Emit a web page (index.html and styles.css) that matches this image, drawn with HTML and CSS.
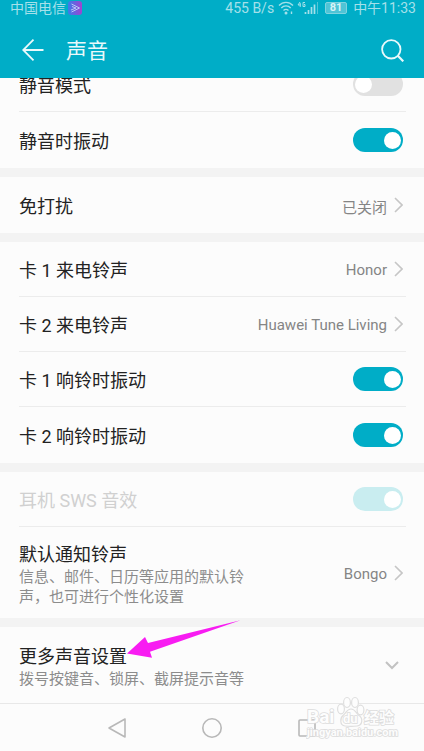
FILE: index.html
```html
<!DOCTYPE html>
<html lang="zh-CN">
<head>
<meta charset="utf-8">
<meta name="viewport" content="width=device-width, initial-scale=1">
<title>声音</title>
<link rel="stylesheet" href="styles.css">
</head>
<body>
<header class="top">
  <div class="status">
    <span>中国电信</span>
    <svg class="app-badge" width="14" height="14" viewBox="0 0 14 14" aria-hidden="true">
      <defs><linearGradient id="g" x1="0" y1="0" x2="1" y2="0"><stop offset="0" stop-color="#3b7bea"/><stop offset="1" stop-color="#a044d0"/></linearGradient></defs>
      <rect width="14" height="14" rx="3" fill="url(#g)"/>
      <path d="M3.500 3l8 4-8 4M4 5.500l4 1.500-5 2" fill="none" stroke="#b9c8f8" stroke-width="1"/>
    </svg>
    <span class="speed">455 B/s</span>
    <svg class="wifi" width="16" height="14" viewBox="0 0 16 14" fill="none" stroke="#a5e0ea" stroke-width="1.400" aria-hidden="true">
      <path d="M1 4.500C5 .3 11 .3 15 4.500M3.300 7c2.600-2.800 6.800-2.800 9.400 0M5.500 9.500c1.500-1.500 3.500-1.500 5 0"/>
      <circle cx="8" cy="12" r=".8" fill="#a5e0ea"/><path d="M13.500 10.500v2.500"/>
    </svg>
    <svg class="signal" width="21" height="14" viewBox="0 0 21 14" fill="none" stroke="#a5e0ea" aria-hidden="true">
      <path d="M3 1L1 4h3M3.200 2v4M8 1.500H6v4h2V3.500H7" stroke-width="1"/>
      <path d="M8.500 11v2M11.500 9v4M14.500 6v7M17.500 3.500V13" stroke-width="1.700"/>
      <path d="M20.500 1v12" stroke-width="1" opacity=".5"/>
    </svg>
    <span class="battery">81</span>
    <span>中午11:33</span>
  </div>
  <div class="bar">
    <button class="icon-btn" aria-label="返回">
      <svg width="22" height="22" viewBox="0 0 22 22" fill="none" stroke="#e9f9fb" stroke-width="1.800"><path d="M21.500 11H1.200M11.500 .7L1.200 11l10.300 10.300"/></svg>
    </button>
    <h1>声音</h1>
    <button class="icon-btn" aria-label="搜索">
      <svg width="23" height="23" viewBox="0 0 23 23" fill="none" stroke="#e9f9fb" stroke-width="1.800"><circle cx="10.300" cy="10.300" r="9.200"/><path d="M16.800 16.800l5.500 5.500" stroke-width="2.200"/></svg>
    </button>
  </div>
</header>

<main class="list">
  <section class="card">
    <label class="row"><span class="name">静音模式</span><input class="switch" type="checkbox"></label>
    <label class="row"><span class="name">静音时振动</span><input class="switch" type="checkbox" checked></label>
  </section>
  <section class="card">
    <a class="row" href="#dnd"><span class="name">免打扰</span><span class="value">已关闭</span><svg class="chev" width="9" height="16" viewBox="0 0 9 16"><path d="M1 1l7 7-7 7"/></svg></a>
  </section>
  <section class="card">
    <a class="row" href="#sim1"><span class="name">卡 1 来电铃声</span><span class="value">Honor</span><svg class="chev" width="9" height="16" viewBox="0 0 9 16"><path d="M1 1l7 7-7 7"/></svg></a>
    <a class="row" href="#sim2"><span class="name">卡 2 来电铃声</span><span class="value">Huawei Tune Living</span><svg class="chev" width="9" height="16" viewBox="0 0 9 16"><path d="M1 1l7 7-7 7"/></svg></a>
    <label class="row"><span class="name">卡 1 响铃时振动</span><input class="switch" type="checkbox" checked></label>
    <label class="row"><span class="name">卡 2 响铃时振动</span><input class="switch" type="checkbox" checked></label>
  </section>
  <section class="card">
    <label class="row off"><span class="name">耳机 SWS 音效</span><input class="switch" type="checkbox" checked disabled></label>
    <a class="row tall" href="#notify"><span class="text"><span class="name">默认通知铃声</span><span class="sub">信息、邮件、日历等应用的默认铃声，也可进行个性化设置</span></span><span class="value">Bongo</span><svg class="chev" width="9" height="16" viewBox="0 0 9 16"><path d="M1 1l7 7-7 7"/></svg></a>
  </section>
  <section class="card">
    <button class="row more"><span class="text"><span class="name marked">更多声音设置<svg class="pointer" width="114" height="39" viewBox="0 0 114 39" aria-hidden="true"><path d="M0 33.500L18 17l3 6L113.500 .3 23 31.700l2 6z" fill="#f81cf2"/></svg></span><span class="sub">拨号按键音、锁屏、截屏提示音等</span></span><svg class="down" width="14" height="9" viewBox="0 0 14 9"><path d="M1 1l6 6 6-6"/></svg></button>
  </section>
</main>

<nav class="nav">
  <button class="icon-btn" aria-label="后退"><svg width="20" height="22" viewBox="0 0 20 22"><path d="M18 2v18L2 11z"/></svg></button>
  <button class="icon-btn" aria-label="主页"><svg width="20" height="22" viewBox="0 0 20 22"><circle cx="10" cy="11" r="9.200"/></svg></button>
  <button class="icon-btn" aria-label="最近任务"><svg width="20" height="22" viewBox="0 0 20 22"><rect x="2" y="3" width="16" height="16" rx="1"/></svg></button>
  <svg class="mark" width="100" height="46" viewBox="0 0 100 46">
    <g fill="#fdfdfd" stroke="#dedede" stroke-width="1.200">
      <ellipse cx="35" cy="14" rx="3.400" ry="4.800"/><ellipse cx="41" cy="7.500" rx="3.400" ry="5"/><ellipse cx="49" cy="7.500" rx="3.400" ry="5"/><ellipse cx="54.500" cy="15" rx="3.400" ry="4.800"/>
      <path d="M45 14c-4 0-5 4-8 6.500-3 2.500-3.500 10 2 10.500 3 .4 9 .4 12 0 6-.8 6-8 2-10.500-3-2.500-4-6.500-8-6.500z"/>
    </g>
    <g class="mark-text">
      <text x="1" y="28" font-size="19">Bai</text>
      <text x="37" y="28" font-size="13">du</text>
      <text x="58" y="28" font-size="15">经验</text>
      <text x="1" y="41" font-size="11">jingyan.baidu.com</text>
    </g>
  </svg>
</nav>
</body>
</html>
```
FILE: styles.css
```css
* { box-sizing: border-box; }

body {
  margin: 0;
  min-height: 100vh;
  display: flex;
  flex-direction: column;
  background: #f3f3f3;
  color: #222;
  font-family: Roboto, "Noto Sans CJK SC", sans-serif;
  overflow-x: hidden;
}

button { border: 0; background: none; padding: 0; font: inherit; color: inherit; text-align: left; }
a { color: inherit; text-decoration: none; }
svg { display: block; flex: none; }

.top { position: relative; z-index: 1; background: #00adc7; }

.status {
  display: flex;
  align-items: center;
  height: 16px;
  padding: 0 8px 0 10px;
  color: #a5e0ea;
  font-size: 14px;
  line-height: 16px;
  white-space: nowrap;
}
.app-badge { margin-left: 2px; }
.speed { margin-left: auto; }
.wifi { margin-left: 4px; }
.signal { margin-left: 3px; }
.battery {
  margin: 0 6px 0 7px;
  width: 22px;
  height: 12px;
  border: 1px solid #80d3e0;
  border-radius: 2px;
  background: #4fc4d6;
  color: #d8f3f7;
  font-size: 11px;
  font-weight: 700;
  line-height: 10px;
  text-align: center;
}

.bar { display: flex; align-items: center; height: 62px; padding: 6px 20px 0 22px; }
.bar h1 { flex: 1; margin: 0 0 0 22px; padding-top: 2px; color: #e9f9fb; font-size: 21px; font-weight: 400; line-height: 30px; }

.list { flex: 1; display: flex; flex-direction: column; gap: 9px; margin-top: -21px; }
.card { background: #fcfcfc; padding: 0 18px 0 19px; }
.card:last-child { flex: 1; }

.row {
  display: flex;
  align-items: center;
  width: 100%;
  height: 55px;
  padding-right: 3px;
  border-bottom: 1px solid #ececec;
}
.row:last-child { height: 56px; border-bottom: 0; }
.row.tall:last-child { height: 91px; }
.row.more:last-child { height: 76px; padding-right: 7px; }

.name { padding-top: 3px; font-size: 18px; line-height: 25px; margin-right: auto; white-space: nowrap; }
.text { display: flex; flex-direction: column; align-items: flex-start; max-width: 232px; margin-right: auto; }
.sub { color: #8c8c8c; font-size: 15px; line-height: 20px; }
.value { padding-top: 2px; color: #858585; font-size: 15px; }
.off { color: #d0d0d0; }

.chev { margin-left: 7px; fill: none; stroke: #c6c6c6; stroke-width: 1.6; }
.down { fill: none; stroke: #c2c2c2; stroke-width: 2; }

.switch {
  appearance: none;
  flex: none;
  display: flex;
  align-items: center;
  width: 50px;
  height: 24px;
  margin: 0;
  padding: 0 2px;
  border-radius: 12px;
  background: #e1e1e1;
}
.switch::before { content: ""; width: 17px; height: 17px; border-radius: 50%; background: #fff; }
.switch:checked { background: #00adc7; justify-content: flex-end; }
.switch:disabled { background: #c9edf0; }

.marked { position: relative; }
.pointer { position: absolute; left: 100%; bottom: 10px; }

.nav {
  position: relative;
  display: flex;
  justify-content: center;
  align-items: center;
  gap: 75px;
  height: 48px;
  border-top: 1px solid #e8e8e8;
  background: #fcfcfc;
}
.nav .icon-btn svg { fill: none; stroke: #b8b8b8; stroke-width: 1.6; stroke-linejoin: round; }
.nav .mark { position: absolute; right: 18px; bottom: 10px; }
.mark-text { fill: #fdfdfd; stroke: #dcdcdc; stroke-width: 1.6; paint-order: stroke; font-weight: 700; }
```
